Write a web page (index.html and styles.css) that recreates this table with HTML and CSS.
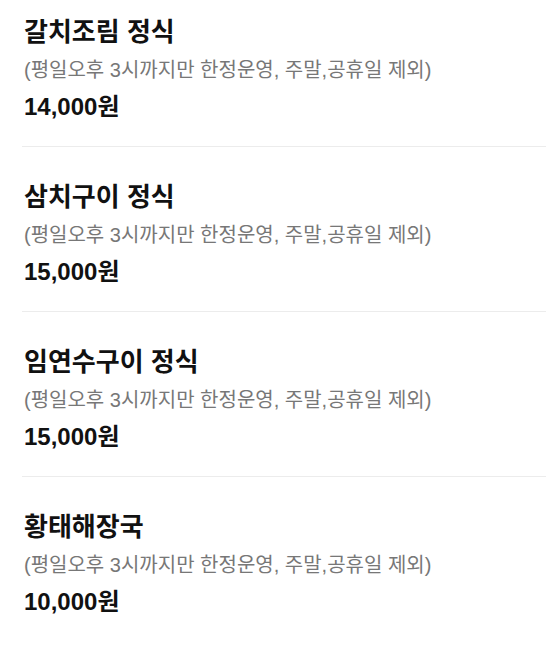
FILE: index.html
```html
<!DOCTYPE html>
<html lang="ko">
<head>
  <meta charset="UTF-8" />
  <meta name="viewport" content="width=device-width, initial-scale=1.0" />
  <title>메뉴</title>
  <link rel="stylesheet" href="styles.css">
</head>
<body>
  <!-- 점심 정식 메뉴 목록 -->
  <ul class="menu-list">
    <li class="menu-item">
      <h3 class="menu-name">갈치조림 정식</h3>
      <p class="menu-desc">(평일오후 3시까지만 한정운영, 주말,공휴일 제외)</p>
      <p class="menu-price">14,000원</p>
    </li>
    <li class="menu-item">
      <h3 class="menu-name">삼치구이 정식</h3>
      <p class="menu-desc">(평일오후 3시까지만 한정운영, 주말,공휴일 제외)</p>
      <p class="menu-price">15,000원</p>
    </li>
    <li class="menu-item">
      <h3 class="menu-name">임연수구이 정식</h3>
      <p class="menu-desc">(평일오후 3시까지만 한정운영, 주말,공휴일 제외)</p>
      <p class="menu-price">15,000원</p>
    </li>
    <li class="menu-item">
      <h3 class="menu-name">황태해장국</h3>
      <p class="menu-desc">(평일오후 3시까지만 한정운영, 주말,공휴일 제외)</p>
      <p class="menu-price">10,000원</p>
    </li>
  </ul>
</body>
</html>
```

FILE: styles.css
```css
body {
  margin: 0;
  padding: 0;
  background: #fff;
  font-family: "Liberation Sans", "Noto Sans CJK KR", sans-serif;
  color: #111;
}
.menu-list {
  list-style: none;
  margin: 0;
  padding: 0 0 0 22px;
}
.menu-item {
  padding: 14px 0 22px 2px;
  border-bottom: 1px solid #ececec;
}
.menu-item + .menu-item {
  padding-top: 32px;
}
.menu-item:last-child {
  border-bottom: none;
}
.menu-name {
  margin: 0;
  font-size: 26px;
  font-weight: bold;
  line-height: 36px;
}
.menu-desc {
  margin: 5px 0 0;
  font-size: 20px;
  color: #777;
  line-height: 30px;
}
.menu-price {
  margin: 5px 0 0;
  font-size: 24px;
  font-weight: bold;
  line-height: 34px;
}
```
